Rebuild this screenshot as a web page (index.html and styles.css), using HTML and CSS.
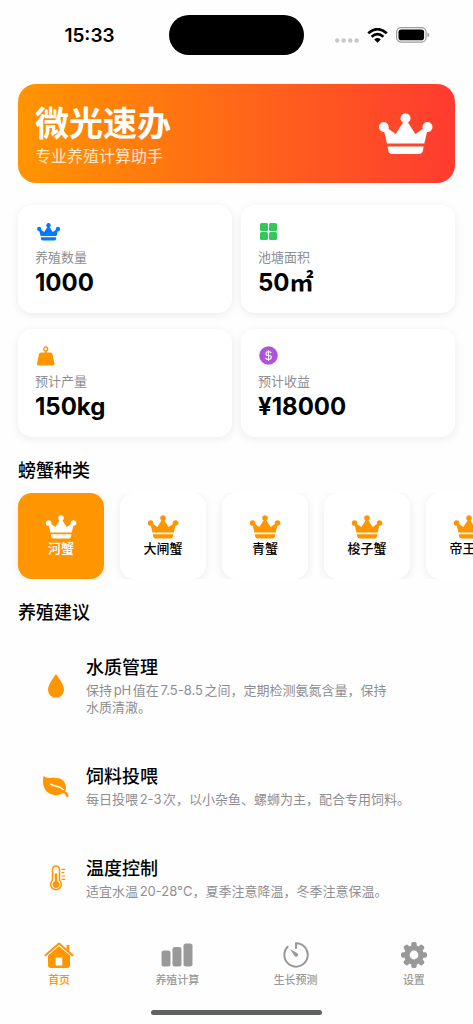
FILE: index.html
```
<!DOCTYPE html>
<html lang="zh-CN">
<head>
<meta charset="utf-8">
<meta name="viewport" content="width=device-width, initial-scale=1">
<title>微光速办</title>
<link rel="stylesheet" href="styles.css">
</head>
<body>
<svg class="defs" aria-hidden="true">
  <symbol id="crown" viewBox="0 0 55 42">
    <path d="M5.600 9a5 5 0 0 1 4.800 6.700L17.600 21 25 9.600a5 5 0 1 1 5 0L37.400 21l7.400-5.300A5 5 0 1 1 49 19L46.300 30.500H9L6.300 19A5 5 0 1 1 5.600 9Z"/>
    <path d="M9.500 33.500H45.700L44.800 38Q44 41 41 41H14.200Q11.200 41 10.400 38Z"/>
  </symbol>
</svg>
<div class="app">
  <header class="status">
    <time class="clock">15:33</time>
    <span class="island"></span>
    <span class="signals">
      <svg class="dots" width="24" height="5" viewBox="0 0 24 5"><circle cx="2.200" cy="2.500" r="2.200"/><circle cx="8.700" cy="2.500" r="2.200"/><circle cx="15.200" cy="2.500" r="2.200"/><circle cx="21.700" cy="2.500" r="2.200"/></svg>
      <svg width="21" height="15" viewBox="0 0 21 15"><path d="M1.200 5.200Q10.500-2.800 19.800 5.200M4.600 8.700Q10.500 3.700 16.400 8.700" fill="none" stroke="#000" stroke-width="2.700"/><path d="M7.200 11.400Q10.500 8.600 13.800 11.400L10.500 14.800Z"/></svg>
      <svg width="34" height="16" viewBox="0 0 34 16"><rect x=".6" y=".6" width="29.500" height="14.500" rx="4.500" fill="none" stroke="#9c9c9c" stroke-width="1.200"/><rect x="2.500" y="2.500" width="25.600" height="10.700" rx="2.800"/><path d="M31.500 5.500q1.800.6 1.800 2.400t-1.800 2.400Z" fill="#9c9c9c"/></svg>
    </span>
  </header>

  <main class="content">
    <section class="hero">
      <div>
        <h1 class="hero-title">微光速办</h1>
        <p class="hero-sub">专业养殖计算助手</p>
      </div>
      <svg class="hero-crown"><use href="#crown"/></svg>
    </section>

    <section class="stats">
      <article class="stat">
        <svg class="stat-icon blue" viewBox="0 0 26 22"><use href="#crown" x="1" y="2" width="25" height="18"/></svg>
        <p class="stat-label">养殖数量</p>
        <p class="stat-value">1000</p>
      </article>
      <article class="stat">
        <svg class="stat-icon green" viewBox="0 0 26 22"><rect x="2" y="2" width="8" height="8" rx="1.500"/><rect x="11" y="2" width="8" height="8" rx="1.500"/><rect x="2" y="11" width="8" height="8" rx="1.500"/><rect x="11" y="11" width="8" height="8" rx="1.500"/></svg>
        <p class="stat-label">池塘面积</p>
        <p class="stat-value">50㎡</p>
      </article>
      <article class="stat">
        <svg class="stat-icon orange" viewBox="0 0 26 22"><circle cx="10.700" cy="4" r="2" fill="none" stroke="currentColor" stroke-width="1.300"/><path d="M10 6h1.400v2H10ZM6 7.500h9.400q1.600 0 2 1.600l2 9.300q.4 2-1.500 2H3.500q-1.900 0-1.500-2l2-9.300Q4.400 7.500 6 7.500Z"/></svg>
        <p class="stat-label">预计产量</p>
        <p class="stat-value">150kg</p>
      </article>
      <article class="stat">
        <svg class="stat-icon purple" viewBox="0 0 26 22"><circle cx="10.500" cy="10.500" r="9.300"/><path d="M13.200 8.200Q12.800 6.600 10.500 6.600T7.900 8.500T10.500 10.500T13.300 12.500T10.500 14.500T7.700 12.800M10.500 5.200V15.900" fill="none" stroke="#fff" stroke-width="1.100"/></svg>
        <p class="stat-label">预计收益</p>
        <p class="stat-value">¥18000</p>
      </article>
    </section>

    <h2 class="heading">螃蟹种类</h2>
    <div class="species">
      <button class="chip active" type="button"><svg class="chip-icon"><use href="#crown"/></svg>河蟹</button>
      <button class="chip" type="button"><svg class="chip-icon"><use href="#crown"/></svg>大闸蟹</button>
      <button class="chip" type="button"><svg class="chip-icon"><use href="#crown"/></svg>青蟹</button>
      <button class="chip" type="button"><svg class="chip-icon"><use href="#crown"/></svg>梭子蟹</button>
      <button class="chip" type="button"><svg class="chip-icon"><use href="#crown"/></svg>帝王蟹</button>
    </div>

    <h2 class="heading">养殖建议</h2>
    <div class="tips">
      <article class="tip">
        <svg class="tip-icon" viewBox="0 0 28 28"><path d="M14 2C16 5 22 12.500 22 17.800a8 8 0 0 1-16 0C6 12.500 12 5 14 2Z"/></svg>
        <div><h3 class="tip-title">水质管理</h3><p class="tip-text">保持pH值在7.5-8.5之间，定期检测氨氮含量，保持<br>水质清澈。</p></div>
      </article>
      <article class="tip">
        <svg class="tip-icon" viewBox="0 0 28 28"><path d="M1.600 3Q4 5.300 10 4.800c8-.8 13.400 2.200 14 9.200q.1 2.600-.9 4.300 3 1.300 3.400 4.300.2 1.700-1.200 1.700-1 0-1.400-1.500-.6-2.300-2.700-2.700Q18.600 22.200 14 22.200C6 22 1 16.200 1 9Q.9 5 1.600 3Z"/><path d="M8.800 11.100c4 2.800 7.500.8 12.400 5.400" fill="none" stroke="#fff" stroke-width="1.500" stroke-linecap="round"/></svg>
        <div><h3 class="tip-title">饲料投喂</h3><p class="tip-text">每日投喂2-3次，以小杂鱼、螺蛳为主，配合专用饲料。</p></div>
      </article>
      <article class="tip">
        <svg class="tip-icon" viewBox="0 0 28 28"><path d="M10.500 15.200V4.600a3.500 3.500 0 0 1 7 0v10.600a5.400 5.400 0 1 1-7 0Z" fill="none" stroke="currentColor" stroke-width="1.500"/><circle cx="14" cy="19.600" r="3.400"/><path d="M14 19.400V9.400" stroke="currentColor" stroke-width="2.400" stroke-linecap="round"/><path d="M19.500 4.400h3.800M19.500 7.700h2.800M19.500 11h3.800M19.500 14.300h3.800" stroke="currentColor" stroke-width="1.200"/></svg>
        <div><h3 class="tip-title">温度控制</h3><p class="tip-text">适宜水温20-28°C，夏季注意降温，冬季注意保温。</p></div>
      </article>
    </div>
  </main>

  <nav class="tabs">
    <a class="tab current" href="#"><svg class="tab-icon" viewBox="0 0 34 28"><path d="M3.500 14.200 17 2.600 30.500 14.200" fill="none" stroke="currentColor" stroke-width="2" stroke-linecap="round" stroke-linejoin="round"/><path d="M24.600 4h2.800v6.500l-2.800-2.400ZM6 14.600 17 5.300l11 9.300V24q0 3-3 3H9q-3 0-3-3ZM13.700 16.500v8h6.600v-8Z" fill-rule="evenodd"/></svg>首页</a>
    <a class="tab" href="#"><svg class="tab-icon" viewBox="0 0 34 28"><rect x="1.500" y="9.500" width="9" height="16" rx="2.500"/><rect x="12.500" y="6" width="9" height="19.500" rx="2.500"/><rect x="23.500" y="2.500" width="9" height="23" rx="2.500"/></svg>养殖计算</a>
    <a class="tab" href="#"><svg class="tab-icon" viewBox="0 0 34 28"><path d="M17 7V2.200A11.700 11.700 0 1 1 8.600 5.800" fill="none" stroke="currentColor" stroke-width="2" stroke-linecap="round" stroke-linejoin="round"/><path d="M11.200 8.200 18 11.900a2 2 0 1 1-2.700 2.800Z"/></svg>生长预测</a>
    <a class="tab" href="#"><svg class="tab-icon" viewBox="0 0 34 28"><g id="teeth"><rect x="14.200" y="1" width="5.600" height="26" rx="2"/><rect x="4" y="11.200" width="26" height="5.600" rx="2"/></g><use href="#teeth" transform="rotate(45 17 14)"/><circle cx="17" cy="14" r="9.800"/><circle cx="17" cy="14" r="4.400" fill="#fefefe"/></svg>设置</a>
  </nav>
  <div class="home-bar"></div>
</div>
</body>
</html>
```
FILE: styles.css
```
* { box-sizing: border-box; }

body {
  margin: 0;
  background: #fefefe;
  color: #000;
  font-family: Inter, "Noto Sans CJK SC", sans-serif;
  text-autospace: normal;
}

h1, h2, h3, p { margin: 0; }

svg { display: block; fill: currentColor; flex: none; }

.defs { display: none; }

.app {
  display: flex;
  flex-direction: column;
  min-height: 100vh;
  overflow: hidden;
}

.status {
  display: grid;
  grid-template-columns: 1fr 135px 1fr;
  align-items: center;
  height: 70px;
}

.clock {
  justify-self: center;
  padding-left: 10px;
  font-size: 19px;
  font-weight: 600;
}

.island {
  height: 40px;
  border-radius: 20px;
  background: #000;
}

.signals {
  display: flex;
  align-items: flex-end;
  justify-content: center;
  gap: 8px;
  padding-right: 12px;
}

.dots { color: #c7c7c9; }

.content {
  display: flex;
  flex-direction: column;
  padding: 14px 18px 0;
}

.hero {
  display: flex;
  align-items: center;
  justify-content: space-between;
  padding: 17px 22px 17px 17px;
  border-radius: 18px;
  background: linear-gradient(90deg, #ff9500, #ff3b30);
  color: #fff;
}

.hero-title {
  font-size: 34px;
  line-height: 45px;
  font-weight: 700;
}

.hero-sub {
  font-size: 16px;
  line-height: 20px;
  opacity: 0.8;
}

.hero-crown { width: 55px; height: 42px; }

.stats {
  display: grid;
  grid-template-columns: 1fr 1fr;
  gap: 16px 9px;
  margin-top: 22px;
}

.stat {
  padding: 16px 17px 15px;
  border-radius: 14px;
  background: #fff;
  box-shadow: 0 2px 10px rgba(0, 0, 0, 0.08);
}

.stat-icon { width: 26px; height: 22px; }

.stat-label {
  margin-top: 6px;
  font-size: 13px;
  line-height: 17px;
  color: #8e8e92;
}

.stat-value {
  margin-top: 2px;
  font-size: 24px;
  line-height: 30px;
  font-weight: 700;
}

.blue { color: #007aff; }
.green { color: #34c759; }
.orange { color: #ff9500; }
.purple { color: #af52de; }

.heading {
  margin-top: 22px;
  font-size: 18px;
  line-height: 24px;
  font-weight: 500;
}

.species {
  display: flex;
  gap: 16px;
  margin: 10px -18px 0;
  padding: 0 18px;
  overflow-x: auto;
  scrollbar-width: none;
}

.chip {
  display: flex;
  flex: none;
  flex-direction: column;
  align-items: center;
  justify-content: center;
  width: 86px;
  height: 86px;
  padding: 0;
  border: 0;
  border-radius: 14px;
  background: #fff;
  box-shadow: 0 2px 10px rgba(0, 0, 0, 0.08);
  color: #000;
  font: 500 13px/18px Inter, "Noto Sans CJK SC", sans-serif;
}

.chip-icon {
  width: 32px;
  height: 24px;
  color: #ff9500;
}

.chip.active { background: #ff9500; color: #fff; }
.chip.active .chip-icon { color: #fff; }

.tips {
  display: flex;
  flex-direction: column;
  gap: 13px;
  margin-top: 13px;
}

.tip {
  display: flex;
  align-items: center;
  gap: 9px;
  padding: 18px 17px;
}

.tip-icon {
  width: 42px;
  height: 28px;
  color: #ff9500;
}

.tip-title {
  font-size: 18px;
  line-height: 24px;
  font-weight: 500;
}

.tip-text {
  margin-top: 2px;
  font-size: 13px;
  line-height: 17px;
  color: #8e8e92;
}

.tabs {
  display: grid;
  grid-template-columns: repeat(4, 1fr);
  margin-top: auto;
  padding-bottom: 23px;
}

.tab {
  display: flex;
  flex-direction: column;
  align-items: center;
  gap: 4px;
  color: #999;
  font-size: 11px;
  line-height: 14px;
  font-weight: 500;
  text-decoration: none;
}

.tab.current { color: #ff9500; }

.tab-icon { width: 34px; height: 28px; }

.home-bar {
  width: 36%;
  height: 5px;
  margin: 0 auto 9px;
  border-radius: 3px;
  background: #606261;
}
```
